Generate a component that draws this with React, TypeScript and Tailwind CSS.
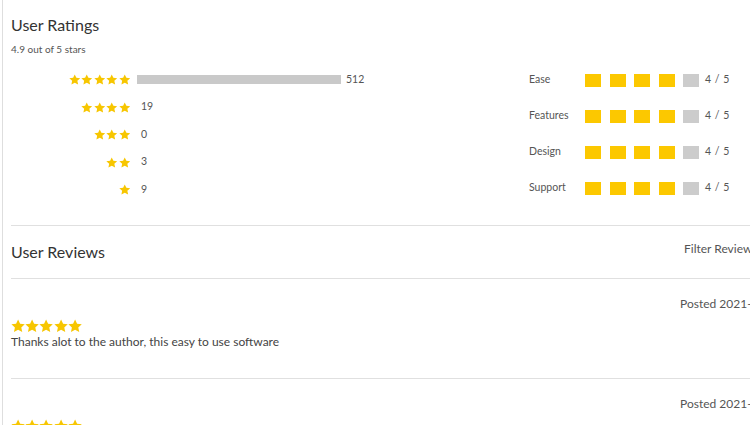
import React from "react";

const distribution = [
  { stars: 5, count: 512 },
  { stars: 4, count: 19 },
  { stars: 3, count: 0 },
  { stars: 2, count: 3 },
  { stars: 1, count: 9 },
];

const criteria = ["Ease", "Features", "Design", "Support"];

const reviews = [
  { date: "Posted 2021-05-18", text: "Thanks alot to the author, this easy to use software" },
  { date: "Posted 2021-04-02", text: "Great tool, works as described" },
];

function Star({ size }: { size: number }) {
  return (
    <svg width={size} height={size} viewBox="0 0 24 24" className="shrink-0">
      <path
        d="M12 .8l3.4 7.2 7.9.9-5.9 5.4 1.6 7.8L12 18.2l-7 3.9 1.6-7.8L.7 8.9l7.9-.9z"
        fill="#f7c600"
      />
    </svg>
  );
}

export default function App() {
  return (
    <div className="w-[750px] h-[425px] overflow-hidden bg-white font-['Lato','Liberation_Sans',sans-serif]">
      <div className="ml-[2px] h-[425px] w-[860px] border-l border-[#dedede] pl-[8px]">
        {/* Ratings */}
        <h2 className="pt-[15px] text-[16px] leading-[20px] text-[#333]">User Ratings</h2>
        <p className="mt-[7px] text-[10px] leading-[14px] text-[#555]">4.9 out of 5 stars</p>

        <div className="mt-[10px] grid grid-cols-[518px_1fr]">
          <div className="flex flex-col">
            {distribution.map((d) => (
              <div key={d.stars} className="flex h-[27.5px] items-center">
                <div className="flex w-[119px] justify-end gap-[1px]">
                  {Array.from({ length: d.stars }).map((_, i) => (
                    <Star key={i} size={11.5} />
                  ))}
                </div>
                {d.count > 100 ? (
                  <>
                    <div className="ml-[7px] h-[9px] w-[204px] bg-[#c9c9c9]" />
                    <span className="ml-[5px] text-[10.5px] text-[#555]">{d.count}</span>
                  </>
                ) : (
                  <span className="ml-[11px] text-[10.5px] text-[#555]">{d.count}</span>
                )}
              </div>
            ))}
          </div>

          <div className="flex flex-col gap-[8px]">
            {criteria.map((c) => (
              <div key={c} className="flex h-[28px] items-center">
                <span className="w-[56px] text-[10.5px] text-[#555]">{c}</span>
                <div className="flex gap-[8.5px]">
                  {[0, 1, 2, 3, 4].map((i) => (
                    <div
                      key={i}
                      className={i < 4 ? "h-[13px] w-[16px] bg-[#fcc800]" : "h-[13px] w-[16px] bg-[#cccccc]"}
                    />
                  ))}
                </div>
                <span className="ml-[6px] text-[10.5px] tracking-[0.5px] text-[#555]">4 / 5</span>
              </div>
            ))}
          </div>
        </div>

        {/* Reviews */}
        <div className="mt-[21px] h-px bg-[#e0e0e0]" />
        <div className="grid grid-cols-[669px_1fr] pt-[16px] pb-[16px]">
          <h2 className="text-[16px] leading-[20px] text-[#333]">User Reviews</h2>
          <span className="mt-[-1px] pl-[4px] text-[12px] leading-[16px] text-[#555]">Filter Reviews</span>
        </div>

        {reviews.map((r) => (
          <div key={r.date}>
            <div className="h-px bg-[#e0e0e0]" />
            <div className="grid grid-cols-[669px_1fr] pt-[17px] pb-[28px]">
              <div className="pt-[23px]">
                <div className="flex">
                  {[0, 1, 2, 3, 4].map((i) => (
                    <Star key={i} size={14.2} />
                  ))}
                </div>
                <p className="mt-[1px] text-[12px] leading-[16px] text-[#444]">{r.text}</p>
              </div>
              <span className="text-[12px] leading-[16px] text-[#555]">{r.date}</span>
            </div>
          </div>
        ))}
      </div>
    </div>
  );
}
